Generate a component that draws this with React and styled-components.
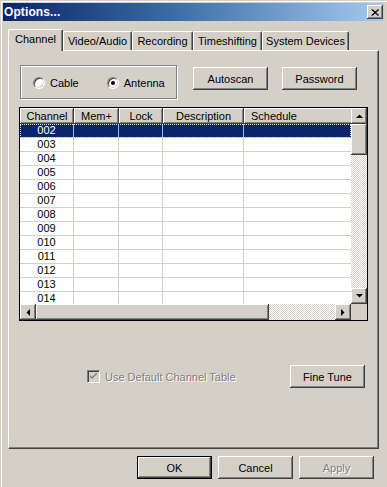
import React from 'react';
import styled, { createGlobalStyle, css } from 'styled-components';

const Global = createGlobalStyle`
  html, body { margin: 0; padding: 0; background: #D4D0C8; }
  body { font-family: "Liberation Sans", Arial, sans-serif; font-size: 11px; color: #000; }
  * { box-sizing: border-box; }
`;

const FACE = '#D4D0C8';

const raised = css`
  background: ${FACE};
  box-shadow: inset -1px -1px #404040, inset 1px 1px #fff, inset -2px -2px #808080, inset 2px 2px ${FACE};
`;

const Window = styled.div`
  width: 387px;
  height: 487px;
  background: ${FACE};
  padding: 3px 3px 0 3px;
  box-shadow: inset 1px 1px ${FACE}, inset 2px 2px #fff;
  display: flex;
  flex-direction: column;
  overflow: hidden;
`;

const TitleBar = styled.div`
  height: 18px;
  display: flex;
  align-items: center;
  padding: 0 1px 0 1px;
  background: linear-gradient(to right, #0A246A 0%, #3A6EA5 45%, #A6CAF0 100%);
`;

const Title = styled.span`
  color: #fff;
  font-weight: bold;
  font-size: 12px;
  font-family: "Liberation Sans", Arial, sans-serif;
  letter-spacing: 0.1px;
`;

const CloseButton = styled.div`
  margin-left: auto;
  width: 16px;
  height: 14px;
  ${raised};
  display: flex;
  align-items: center;
  justify-content: center;
`;

const Body = styled.div`
  padding: 8px 5px 0 5px;
  display: flex;
  flex-direction: column;
`;

const TabRow = styled.div`
  display: flex;
  align-items: flex-end;
  height: 21px;
  position: relative;
  z-index: 1;
`;

const Tab = styled.div`
  width: ${p => p.$w}px;
  height: ${p => (p.$active ? 22 : 19)}px;
  margin-bottom: ${p => (p.$active ? -1 : 0)}px;
  background: ${FACE};
  border-top: 1px solid #fff;
  border-left: 1px solid #fff;
  border-right: 1px solid #404040;
  border-top-left-radius: 2px;
  border-top-right-radius: 2px;
  box-shadow: inset -1px 0 #808080;
  display: flex;
  align-items: ${p => (p.$active ? 'flex-start' : 'center')};
  padding-top: ${p => (p.$active ? 3 : 0)}px;
  justify-content: center;
  white-space: nowrap;
  font-size: 11px;
`;

const Panel = styled.div`
  width: 371px;
  height: 399px;
  background: ${FACE};
  border-top: 1px solid #fff;
  border-left: 1px solid #fff;
  border-right: 1px solid #404040;
  border-bottom: 1px solid #404040;
  box-shadow: inset -1px -1px #808080;
  padding: 14px 10px 0 10px;
  display: flex;
  flex-direction: column;
`;

const TopRow = styled.div`
  display: flex;
  align-items: flex-start;
`;

const GroupBox = styled.div`
  margin-left: 1px;
  width: 157px;
  height: 34px;
  border: 1px solid #808080;
  box-shadow: inset 1px 1px #fff, 1px 1px #fff;
  display: flex;
  align-items: center;
  padding-left: 12px;
  padding-top: 1px;
  gap: 28px;
`;

const RadioLabel = styled.label`
  display: flex;
  align-items: center;
  gap: 5px;
  font-size: 11px;
`;

const RadioCircle = styled.span`
  width: 12px;
  height: 12px;
  border-radius: 50%;
  background: #fff;
  border: 1px solid;
  border-color: #808080 #fff #fff #808080;
  box-shadow: inset 1px 1px #404040, inset -1px -1px ${FACE};
  display: flex;
  align-items: center;
  justify-content: center;
  &::after {
    content: '';
    width: 4px;
    height: 4px;
    border-radius: 50%;
    background: #000;
    display: ${p => (p.$checked ? 'block' : 'none')};
  }
`;

const Button = styled.div`
  width: 75px;
  height: 23px;
  flex: none;
  margin-left: ${p => (p.$ml === undefined ? '0px' : typeof p.$ml === 'number' ? `${p.$ml}px` : p.$ml)};
  margin-top: ${p => p.$mt || 0}px;
  margin-right: ${p => p.$mr || 0}px;
  ${raised};
  ${p => p.$default && css`
    box-shadow: inset 0 0 0 1px #000, inset -2px -2px #404040, inset 2px 2px #fff, inset -3px -3px #808080;
  `}
  display: flex;
  align-items: center;
  justify-content: center;
  font-size: 11px;
  color: ${p => (p.$disabled ? '#808080' : '#000')};
  text-shadow: ${p => (p.$disabled ? '1px 1px #fff' : 'none')};
`;

const ListView = styled.div`
  margin-top: 8px;
  width: 349px;
  height: 214px;
  border: 1px solid #000;
  background: #fff;
  display: grid;
  grid-template-columns: 331px 16px;
  grid-template-rows: 196px 16px;
`;

const ListContent = styled.div`
  overflow: hidden;
  display: flex;
  flex-direction: column;
`;

const COLS = [54, 45, 44, 81, 140];

const HeaderRow = styled.div`
  display: flex;
  height: 16px;
  flex: none;
`;

const HeaderCell = styled.div`
  width: ${p => p.$w}px;
  flex: none;
  height: 16px;
  ${raised};
  display: flex;
  align-items: center;
  justify-content: ${p => (p.$left ? 'flex-start' : 'center')};
  padding-left: ${p => (p.$left ? 7 : 0)}px;
  padding-bottom: 1px;
  font-size: 11px;
  white-space: nowrap;
`;

const Row = styled.div`
  display: flex;
  height: 14px;
  flex: none;
  background: ${p => (p.$selected ? '#0A246A' : '#fff')};
  color: ${p => (p.$selected ? '#fff' : '#000')};
  border-bottom: 1px solid ${p => (p.$selected ? '#A6B8D8' : FACE)};
  ${p => p.$selected && css`
    outline: 1px dotted #E8E8C0;
    outline-offset: -1px;
  `}
`;

const Cell = styled.div`
  width: ${p => p.$w}px;
  flex: none;
  border-right: 1px solid ${p => (p.$selected ? '#A6B8D8' : FACE)};
  display: flex;
  align-items: center;
  justify-content: center;
  font-size: 11px;
  line-height: 13px;
`;

const VScroll = styled.div`
  display: flex;
  flex-direction: column;
`;

const HScroll = styled.div`
  display: flex;
`;

const ArrowBtn = styled.div`
  width: 16px;
  height: 16px;
  flex: none;
  ${raised};
  display: flex;
  align-items: center;
  justify-content: center;
`;

const Thumb = styled.div`
  flex: none;
  ${p => (p.$vertical ? css`height: 31px; width: 16px;` : css`width: 233px; height: 16px;`)}
  ${raised};
`;

const Track = styled.div`
  flex: 1;
  background-color: #fff;
  background-image: conic-gradient(${FACE} 25%, #fff 0 50%, ${FACE} 0 75%, #fff 0);
  background-size: 2px 2px;
`;

const Corner = styled.div`
  background: ${FACE};
`;

const BottomRow = styled.div`
  margin-top: 44px;
  height: 23px;
  display: flex;
  align-items: center;
`;

const CheckLabel = styled.label`
  margin-left: 68px;
  display: flex;
  align-items: center;
  gap: 5px;
  color: #808080;
  text-shadow: 1px 1px #fff;
  font-size: 11px;
`;

const CheckBox = styled.span`
  width: 13px;
  height: 13px;
  background: ${FACE};
  border: 1px solid;
  border-color: #808080 #fff #fff #808080;
  box-shadow: inset 1px 1px #404040, inset -1px -1px ${FACE};
  display: flex;
  align-items: center;
  justify-content: center;
`;

const Footer = styled.div`
  margin-top: 7px;
  display: flex;
  justify-content: flex-end;
  gap: 6px;
  padding-right: 5px;
`;

const Arrow = ({ dir }) => {
  const pts = {
    up: '0,4 3.5,0.5 7,4',
    down: '0,0 3.5,3.5 7,0',
    left: '4,0 0.5,3.5 4,7',
    right: '0,0 3.5,3.5 0,7',
  }[dir];
  const vert = dir === 'up' || dir === 'down';
  return (
    <svg width={vert ? 7 : 4} height={vert ? 4 : 7} viewBox={vert ? '0 0 7 4' : '0 0 4 7'}>
      <polygon points={pts} fill="#000" />
    </svg>
  );
};

const rows = ['002', '003', '004', '005', '006', '007', '008', '009', '010', '011', '012', '013', '014'];
const tabs = [
  ['Channel', 55, true],
  ['Video/Audio', 69],
  ['Recording', 61],
  ['Timeshifting', 69],
  ['System Devices', 87],
];

export default function App() {
  return (
    <>
      <Global />
      <Window>
        <TitleBar>
          <Title>Options...</Title>
          <CloseButton>
            <svg width="8" height="7" viewBox="0 0 8 7">
              <path d="M0.5 0.5 L7 6.5 M1.5 0.5 L8 6.5 M7 0.5 L0.5 6.5 M8 0.5 L1.5 6.5" stroke="#000" strokeWidth="1" />
            </svg>
          </CloseButton>
        </TitleBar>
        <Body>
          <TabRow>
            {tabs.map(([t, w, a]) => (
              <Tab key={t} $w={w} $active={a}>{t}</Tab>
            ))}
          </TabRow>
          <Panel>
            <TopRow>
              <GroupBox>
                <RadioLabel><RadioCircle />Cable</RadioLabel>
                <RadioLabel><RadioCircle $checked />Antenna</RadioLabel>
              </GroupBox>
              <Button $ml={16} $mt={2}>Autoscan</Button>
              <Button $ml={14} $mt={2}>Password</Button>
            </TopRow>
            <ListView>
              <ListContent>
                <HeaderRow>
                  <HeaderCell $w={COLS[0]}>Channel</HeaderCell>
                  <HeaderCell $w={COLS[1]}>Mem+</HeaderCell>
                  <HeaderCell $w={COLS[2]}>Lock</HeaderCell>
                  <HeaderCell $w={COLS[3]}>Description</HeaderCell>
                  <HeaderCell $w={COLS[4]} $left>Schedule</HeaderCell>
                </HeaderRow>
                {rows.map((r, i) => (
                  <Row key={r} $selected={i === 0}>
                    {COLS.map((w, c) => (
                      <Cell key={c} $w={w} $selected={i === 0}>{c === 0 ? r : ''}</Cell>
                    ))}
                  </Row>
                ))}
              </ListContent>
              <VScroll>
                <ArrowBtn><Arrow dir="up" /></ArrowBtn>
                <Thumb $vertical />
                <Track />
                <ArrowBtn><Arrow dir="down" /></ArrowBtn>
              </VScroll>
              <HScroll>
                <ArrowBtn><Arrow dir="left" /></ArrowBtn>
                <Thumb />
                <Track />
                <ArrowBtn><Arrow dir="right" /></ArrowBtn>
              </HScroll>
              <Corner />
            </ListView>
            <BottomRow>
              <CheckLabel>
                <CheckBox>
                  <svg width="7" height="7" viewBox="0 0 7 7">
                    <path d="M0 2 L0 4 L2 6 L7 1 L7 -1 L2 4 Z" fill="#808080" />
                  </svg>
                </CheckBox>
                Use Default Channel Table
              </CheckLabel>
              <Button $ml="auto" $mr={3}>Fine Tune</Button>
            </BottomRow>
          </Panel>
          <Footer>
            <Button $default>OK</Button>
            <Button>Cancel</Button>
            <Button $disabled>Apply</Button>
          </Footer>
        </Body>
      </Window>
    </>
  );
}
